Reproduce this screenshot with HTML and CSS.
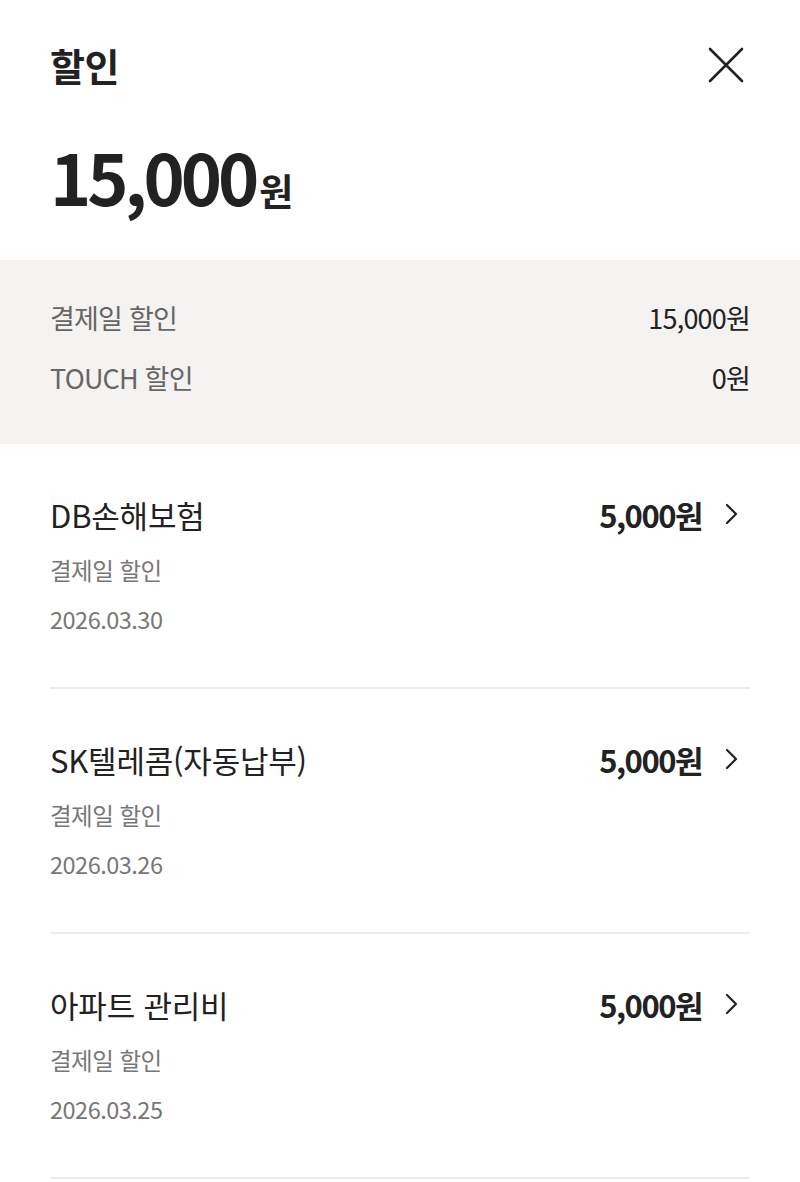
FILE: index.html
```html
<!DOCTYPE html>
<html lang="ko">
<head>
<meta charset="utf-8">
<link rel="stylesheet" href="styles.css">
</head>
<body>
<div class="page">
  <header class="head">
    <h1 class="title">할인</h1>
    <button class="close" aria-label="닫기">
      <svg width="36" height="36" viewBox="0 0 36 36"><path d="M2 2 L34 34 M34 2 L2 34" stroke="#222" stroke-width="2.6" stroke-linecap="round" fill="none"/></svg>
    </button>
  </header>
  <div class="total"><span class="num">15,000</span><span class="won">원</span></div>

  <section class="summary">
    <div class="srow"><span class="slabel">결제일 할인</span><span class="sval">15,000원</span></div>
    <div class="srow"><span class="slabel">TOUCH 할인</span><span class="sval">0원</span></div>
  </section>

  <ul class="list">
    <li class="item">
      <div class="top"><span class="name">DB손해보험</span><span class="amt">5,000원<svg class="chev" width="16" height="24" viewBox="0 0 16 24"><path d="M3 3 L12 12 L3 21" stroke="#222" stroke-width="2.2" fill="none" stroke-linecap="round" stroke-linejoin="round"/></svg></span></div>
      <div class="sub">결제일 할인</div>
      <div class="date">2026.03.30</div>
    </li>
    <li class="item">
      <div class="top"><span class="name">SK텔레콤(자동납부)</span><span class="amt">5,000원<svg class="chev" width="16" height="24" viewBox="0 0 16 24"><path d="M3 3 L12 12 L3 21" stroke="#222" stroke-width="2.2" fill="none" stroke-linecap="round" stroke-linejoin="round"/></svg></span></div>
      <div class="sub">결제일 할인</div>
      <div class="date">2026.03.26</div>
    </li>
    <li class="item">
      <div class="top"><span class="name">아파트 관리비</span><span class="amt">5,000원<svg class="chev" width="16" height="24" viewBox="0 0 16 24"><path d="M3 3 L12 12 L3 21" stroke="#222" stroke-width="2.2" fill="none" stroke-linecap="round" stroke-linejoin="round"/></svg></span></div>
      <div class="sub">결제일 할인</div>
      <div class="date">2026.03.25</div>
    </li>
  </ul>
</div>
</body>
</html>
```
FILE: styles.css
```css
* { box-sizing: border-box; }
html, body { margin: 0; padding: 0; background: #fff; }
body {
  font-family: "Noto Sans CJK KR", "Noto Sans", sans-serif;
  color: #222;
  width: 800px;
  height: 1182px;
  overflow: hidden;
}
.head {
  display: flex;
  justify-content: space-between;
  align-items: center;
  padding: 40px 56px 0 50px;
  height: 90px;
}
.title {
  margin: 0;
  font-size: 38px;
  font-weight: 700;
  line-height: 50px;
  letter-spacing: -0.5px;
}
.close {
  border: 0;
  background: none;
  padding: 0;
  width: 36px;
  height: 36px;
  display: flex;
}
.total {
  padding: 46px 50px 0;
  height: 170px;
  display: flex;
  align-items: baseline;
}
.num {
  font-size: 70px;
  font-weight: 700;
  letter-spacing: -4px;
  line-height: 80px;
}
.won {
  font-size: 37px;
  font-weight: 700;
  margin-left: 4px;
}
.summary {
  background: #f5f3f2;
  padding: 39px 50px 0;
  height: 184px;
  display: flex;
  flex-direction: column;
  gap: 22px;
}
.srow {
  display: flex;
  justify-content: space-between;
  align-items: center;
  line-height: 38px;
  font-size: 27px;
  letter-spacing: -0.8px;
}
.slabel { color: #666; }
.sval { color: #222; }
.list {
  list-style: none;
  margin: 0;
  padding: 0 50px;
}
.item {
  padding: 50px 0 53px;
  border-bottom: 2px solid #ececec;
}
.top {
  display: flex;
  justify-content: space-between;
  align-items: center;
  height: 40px;
}
.name {
  font-size: 31px;
  letter-spacing: -0.2px;
  color: #222;
}
.amt {
  font-size: 31px;
  font-weight: 700;
  letter-spacing: -1.5px;
  display: flex;
  align-items: center;
}
.chev { margin-left: 22px; margin-right: 10px; }
.sub, .date {
  font-size: 23.5px;
  color: #777;
  line-height: 30px;
  letter-spacing: -0.5px;
}
.sub { margin-top: 21px; }
.date { margin-top: 19px; }
```
